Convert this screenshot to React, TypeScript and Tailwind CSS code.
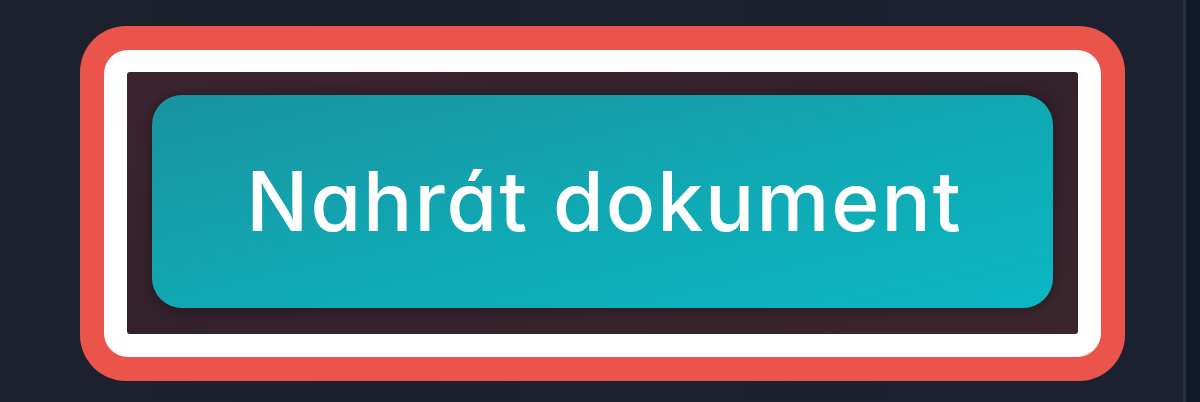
export default function App() {
  return (
    <div className="flex h-[402px] w-[1200px] overflow-hidden bg-[#1c202e] font-['Inter','Noto_Sans',sans-serif]">
      <main className="flex-1 pl-[80px] pt-[26px] bg-gradient-to-r from-[#1d202d] to-[#1b2131]">
        <div className="inline-flex rounded-[46px] bg-[#ea544a] p-[24px]">
          <div className="rounded-[24px] bg-white p-[23px] pt-[22px]">
            <div className="flex h-[262px] w-[951px] rounded-[3px] bg-gradient-to-br from-[#3d2530] via-[#33212b] to-[#3c262e] pl-[25px] pt-[23px]">
              <button className="flex h-[213px] w-[901px] items-center justify-center rounded-[30px] bg-gradient-to-br from-[#1893a0] via-[#10a8b3] to-[#0bb7c3] shadow-[0_0_14px_rgba(0,0,0,0.35)]">
                <span className="pl-[4px] text-[82px] font-medium leading-none tracking-[2px] text-white [font-feature-settings:'cv11']">
                  Nahrát dokument
                </span>
              </button>
            </div>
          </div>
        </div>
      </main>
      <aside className="w-[17px] border-l-[3px] border-[#283042] bg-[#111a2b]" />
    </div>
  );
}
